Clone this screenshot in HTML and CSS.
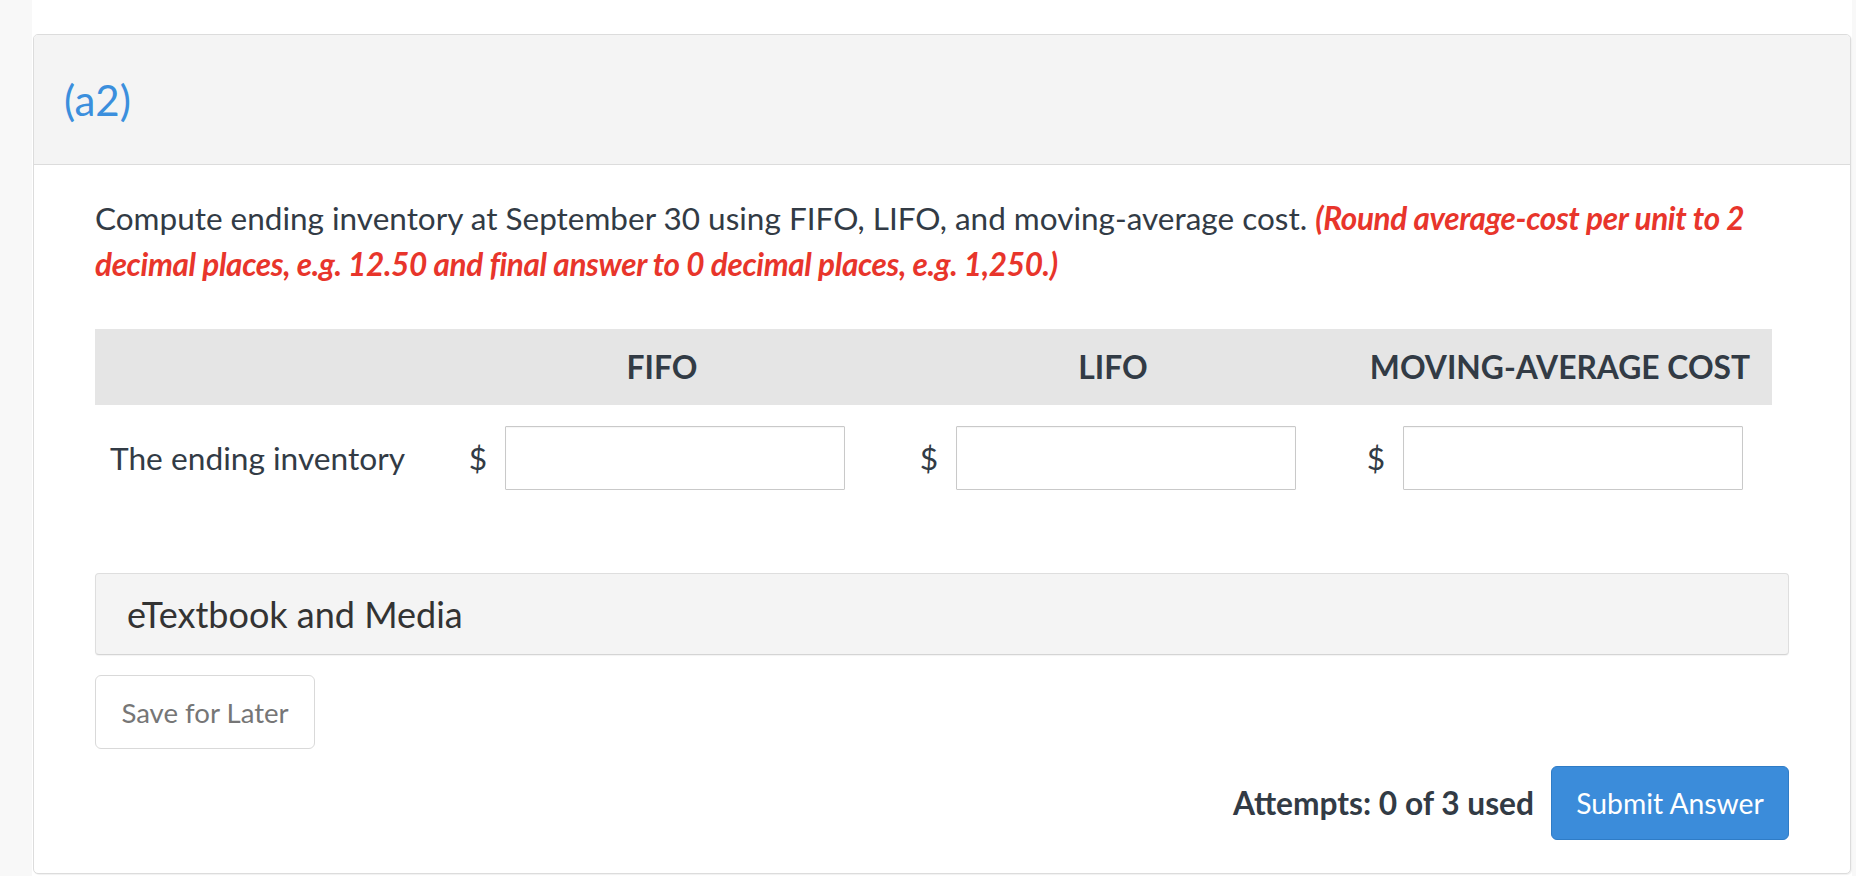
FILE: index.html
```html
<!DOCTYPE html>
<html lang="en">
<head>
<meta charset="utf-8">
<title>(a2)</title>
<link rel="stylesheet" href="styles.css">
</head>
<body>
<div class="page">
  <section class="card">
    <header class="card-head">(a2)</header>
    <div class="card-body">
      <p class="question">Compute ending inventory at September 30 using FIFO, LIFO, and moving-average cost. <em class="note">(Round average-cost per unit to 2 decimal places, e.g. 12.50 and final answer to 0 decimal places, e.g. 1,250.)</em></p>

      <div class="grid">
        <div class="th"></div>
        <div class="th">FIFO</div>
        <div class="th">LIFO</div>
        <div class="th">MOVING-AVERAGE COST</div>

        <div class="label">The ending inventory</div>
        <div class="cell"><span class="cur">$</span><input class="inp" type="text"></div>
        <div class="cell"><span class="cur">$</span><input class="inp" type="text"></div>
        <div class="cell"><span class="cur">$</span><input class="inp" type="text"></div>
      </div>

      <div class="media">eTextbook and Media</div>

      <button class="btn-save" type="button">Save for Later</button>

      <div class="submit-row">
        <span class="attempts">Attempts: 0 of 3 used</span>
        <button class="btn-submit" type="button">Submit Answer</button>
      </div>
    </div>
  </section>
</div>
</body>
</html>
```

FILE: styles.css
```css
* { box-sizing: border-box; }

html, body {
  margin: 0;
  padding: 0;
  height: 876px;
  overflow: hidden;
}

body {
  background: #f8f8f8;
  font-family: Lato, "Open Sans", "Liberation Sans", sans-serif;
  color: #333b45;
}

.page {
  margin: 0 4px 0 32px;
  background: #fff;
  padding: 34px 1px 0 1px;
  height: 876px;
}

.card {
  border: 1px solid #dcdcdc;
  border-radius: 5px;
  background: #fff;
  box-shadow: 1px 1px 1px rgba(0,0,0,0.06);
  overflow: hidden;
}

.card-head {
  height: 130px;
  background: #f4f4f4;
  border-bottom: 1px solid #dcdcdc;
  padding-left: 30px;
  display: flex;
  align-items: center;
  font-size: 42px;
  color: #3b8fdd;
  font-weight: 400;
}

.card-body {
  padding: 30px 61px 33px 61px;
}

.question {
  margin: 0;
  font-size: 31.5px;
  line-height: 46px;
  color: #323b45;
}

.note {
  color: #e8352b;
  font-weight: 700;
  font-style: italic;
  letter-spacing: -0.35px;
}

.grid {
  margin-top: 42px;
  width: 1677px;
  display: grid;
  grid-template-columns: 351px 432px 470px 424px;
}

.th {
  background: #e5e5e5;
  height: 76px;
  display: flex;
  align-items: center;
  justify-content: center;
  font-weight: 700;
  font-size: 31.8px;
  color: #323b45;
}

.label {
  padding: 21px 0 0 15px;
  height: 85px;
  display: flex;
  align-items: center;
  font-size: 31.7px;
  color: #323b45;
}

.cell {
  padding-top: 21px;
  padding-right: 10px;
  display: flex;
  align-items: center;
  justify-content: center;
  gap: 18px;
}

.cur {
  font-size: 31.7px;
  color: #323b45;
}

.inp {
  width: 340px;
  height: 64px;
  border: 1px solid #c9c9c9;
  border-radius: 1px;
  background: #fff;
  box-shadow: inset 0 1px 1px rgba(0,0,0,0.04);
  margin: 0;
  padding: 0 10px;
  font: inherit;
}

.media {
  margin-top: 83px;
  height: 82px;
  background: #f4f4f4;
  border: 1px solid #dedede;
  border-bottom-color: #d4d4d4;
  border-radius: 4px;
  box-shadow: 0 1px 1px rgba(0,0,0,0.05);
  display: flex;
  align-items: center;
  padding-left: 31px;
  font-size: 36px;
  color: #333;
}

.btn-save {
  display: block;
  margin-top: 20px;
  width: 220px;
  height: 74px;
  background: #fff;
  border: 1px solid #d9d9d9;
  border-radius: 6px;
  font-family: inherit;
  font-size: 27.6px;
  color: #767676;
  padding: 0;
}

.submit-row {
  margin-top: 17px;
  display: flex;
  justify-content: flex-end;
  align-items: center;
  gap: 17px;
}

.attempts {
  font-size: 31.7px;
  font-weight: 700;
  color: #323b45;
}

.btn-submit {
  width: 238px;
  height: 74px;
  background: #3b8cda;
  border: 1px solid #2f7cc6;
  border-radius: 6px;
  color: #fff;
  font-family: inherit;
  font-size: 28.3px;
  padding: 0;
}
```
